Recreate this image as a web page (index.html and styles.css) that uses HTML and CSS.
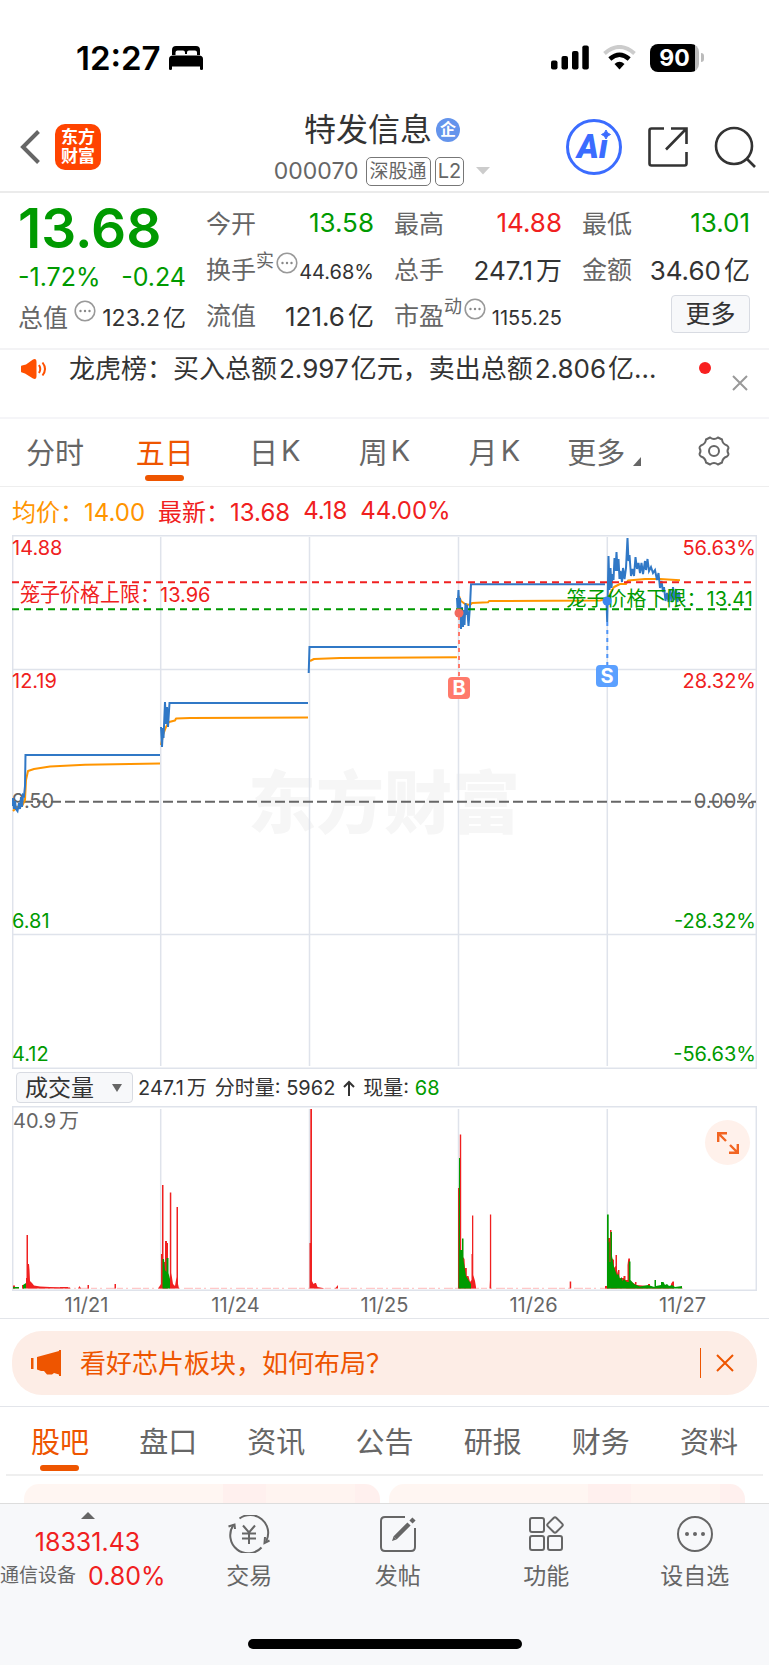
FILE: index.html
```html
<!DOCTYPE html>
<html lang="zh-CN">
<head>
<meta charset="utf-8">
<meta name="viewport" content="width=device-width, initial-scale=1">
<title>特发信息 000070</title>
<link rel="stylesheet" href="styles.css">
</head>
<body>
<div class="app">
  <div class="status">
    <div class="status-left">
      <span class="clock">12:27</span>
      <svg width="34" height="24" viewBox="0 0 34 24" aria-hidden="true">
        <path d="M3 9V4Q3 0 7 0H27Q31 0 31 4V9H28V6.500Q28 4.500 26 4.500H20Q18 4.500 18 6.500V8H16V6.500Q16 4.500 14 4.500H8.500Q6.500 4.500 6.500 6.500V9Z"/>
        <path d="M0 23V13Q0 9.500 4 9.500H30Q34 9.500 34 13V23Q34 24 32.500 24Q31 24 31 23V20.500H3V23Q3 24 1.500 24Q0 24 0 23Z"/>
      </svg>
    </div>
    <div class="status-right">
      <svg width="38" height="25" viewBox="0 0 38 25" aria-hidden="true">
        <rect x="0" y="15.500" width="6.500" height="9" rx="2"/><rect x="10.500" y="11" width="6.500" height="13.500" rx="2"/><rect x="21" y="6" width="6.500" height="18.500" rx="2"/><rect x="31.300" y="0.500" width="6.500" height="24" rx="2"/>
      </svg>
      <svg width="33" height="25" viewBox="0 0 33 25" fill="none" aria-hidden="true">
        <path d="M1.500 8.500Q16.500 -4.500 31.500 8.500" stroke="#ccc" stroke-width="4"/>
        <path d="M6.800 14Q16.500 5.500 26.200 14" stroke="#000" stroke-width="4.500"/>
        <path d="M11.500 19Q16.500 14.500 21.500 19L16.500 24.500Z" fill="#000"/>
      </svg>
      <span class="battery"><span class="battery-body">90</span><span class="battery-tip"></span></span>
    </div>
  </div>

  <header class="header">
    <div class="header-left">
      <button class="plain" aria-label="返回"><svg width="20" height="34" viewBox="0 0 20 34" fill="none" stroke="#666" stroke-width="4"><path d="M18.500 1.500L3 17L18.500 32.500"/></svg></button>
      <span class="logo">东方<br>财富</span>
    </div>
    <div class="header-mid">
      <h1 class="title">特发信息<span class="badge-qi">企</span></h1>
      <div class="subtitle"><span>000070</span><span class="tag">深股通</span><span class="tag tag-l2">L2</span>
        <svg class="subtitle-caret" width="14" height="8" viewBox="0 0 14 8" fill="#ccc"><path d="M0 0H14L7 7.500Z"/></svg></div>
    </div>
    <div class="header-right">
      <button class="plain" aria-label="AI"><svg width="56" height="56" viewBox="0 0 56 56" fill="none">
        <circle cx="28" cy="28" r="26.500" stroke="#3b6cff" stroke-width="3"/>
        <text class="ai-text" x="11" y="39">Aı</text>
        <path d="M40 11Q41 14.500 44.500 15.500Q41 16.500 40 20Q39 16.500 35.500 15.500Q39 14.500 40 11Z" fill="#3b6cff" stroke="#3b6cff" stroke-width="1"/>
      </svg></button>
      <button class="plain" aria-label="分享"><svg width="40" height="40" viewBox="0 0 40 40" fill="none" stroke="#333" stroke-width="2.600">
        <path d="M16 1.500H3.500Q1.500 1.500 1.500 3.500V36.500Q1.500 38.500 3.500 38.500H36.500Q38.500 38.500 38.500 36.500V25"/><path d="M23 1.500H38.500V17M38 2L18 22.500"/></svg></button>
      <button class="plain" aria-label="搜索"><svg width="42" height="42" viewBox="0 0 42 42" fill="none" stroke="#333" stroke-width="2.600">
        <circle cx="20" cy="20" r="18"/><path d="M32.500 32.500L41 41"/></svg></button>
    </div>
  </header>

  <section class="quote">
    <div class="qcol">
      <div class="price green">13.68</div>
      <div class="qrow qrow-change green"><span>-1.72%</span><span>-0.24</span></div>
      <div class="qrow qrow-cap"><span class="lab">总值</span><svg class="more-dot gap-left" viewBox="0 0 22 22"><use href="#dots"/></svg><span class="val val-m">123.2<i class="unit">亿</i></span></div>
    </div>
    <div class="qcol">
      <div class="qrow"><span class="lab">今开</span><span class="val green">13.58</span></div>
      <div class="qrow"><span class="lab">换手</span><span class="sup">实</span><svg class="more-dot" viewBox="0 0 22 22"><use href="#dots"/></svg><span class="val val-s">44.68%</span></div>
      <div class="qrow"><span class="lab">流值</span><span class="val">121.6<i class="unit">亿</i></span></div>
    </div>
    <div class="qcol">
      <div class="qrow"><span class="lab">最高</span><span class="val red">14.88</span></div>
      <div class="qrow"><span class="lab">总手</span><span class="val">247.1<i class="unit">万</i></span></div>
      <div class="qrow"><span class="lab">市盈</span><span class="sup">动</span><svg class="more-dot" viewBox="0 0 22 22"><use href="#dots"/></svg><span class="val val-s">1155.25</span></div>
    </div>
    <div class="qcol">
      <div class="qrow"><span class="lab">最低</span><span class="val green">13.01</span></div>
      <div class="qrow"><span class="lab">金额</span><span class="val">34.60<i class="unit">亿</i></span></div>
      <div class="qrow qrow-end"><button class="more-btn">更多</button></div>
    </div>
    <svg width="0" height="0" class="defs"><defs><g id="dots"><circle cx="11" cy="11" r="9.800" fill="none" stroke="#999" stroke-width="1.600"/><g fill="#888"><circle cx="6.500" cy="11" r="1.200"/><circle cx="11" cy="11" r="1.200"/><circle cx="15.500" cy="11" r="1.200"/></g></g></defs></svg>
  </section>

  <section class="news">
    <svg width="26" height="22" viewBox="0 0 26 22" fill="#ff5000"><path d="M1 7.500Q0 7.500 0 8.500V13.500Q0 14.500 1 14.500L4 15.500L12 20.500Q15.500 22 15.500 18V4Q15.500 0 12 1.500L5 6.500Z"/><path d="M18 7Q20.500 11 18 15M21.500 4.500Q26.500 11 21.500 17.500" fill="none" stroke="#ff5000" stroke-width="2"/></svg>
    <span class="news-text">龙虎榜：买入总额<span class="num">2.997</span>亿元，卖出总额<span class="num">2.806</span>亿…</span>
    <span class="news-dot"></span>
    <button class="plain news-close" aria-label="关闭"><svg width="16" height="16" viewBox="0 0 16 16" stroke="#999" stroke-width="2"><path d="M1 1L15 15M15 1L1 15"/></svg></button>
  </section>

  <nav class="periods">
    <button class="tab">分时</button><button class="tab active">五日</button><button class="tab">日<span class="k">K</span></button><button class="tab">周<span class="k">K</span></button><button class="tab">月<span class="k">K</span></button>
    <button class="tab">更多<svg class="corner" width="8" height="9" viewBox="0 0 8 9" fill="#666"><path d="M8 0V9H0Z"/></svg></button>
    <button class="tab" aria-label="设置"><svg width="32" height="30" viewBox="0 0 32 30" fill="none" stroke="#666" stroke-width="2"><path d="M12 1.500Q16 4.500 20 1.500L24 3.500Q24.500 8 29 9.500Q30.500 10.500 30.500 12Q28.500 15 30.500 18Q30.500 19.500 29 20.500Q24.500 22 24 26.500L20 28.500Q16 25.500 12 28.500L8 26.500Q7.500 22 3 20.500Q1.500 19.500 1.500 18Q3.500 15 1.500 12Q1.500 10.500 3 9.500Q7.500 8 8 3.500Z"/><circle cx="16" cy="15" r="5"/></svg></button>
  </nav>

  <div class="legend"><span class="orange">均价：14.00</span><span class="red">最新：13.68</span><span class="red">4.18</span><span class="red">44.00%</span></div>

  <div class="chart-wrap">
    <svg class="chart" viewBox="12 535 745 534" role="img" aria-label="五日走势">
      <text class="watermark" x="384" y="828">东方财富</text>
      <g stroke="#dfe3eb" stroke-width="1.500" fill="none">
        <path d="M12 535.700H756.300V1068.200H12.700V535.700M12 669.500H756M12 934.500H756"/>
        <path d="M160.700 537V1066M309.500 537V1066M458.500 537V1066M607.300 537V1066"/>
      </g>
      <path d="M23 801.700H756" stroke="#666" stroke-width="2" stroke-dasharray="10 4"/>
      <g class="axis">
        <text x="12" y="555" class="f-red">14.88</text><text x="12" y="688" class="f-red">12.19</text><text x="12" y="808" class="f-gray">9.50</text><text x="12" y="928" class="f-green">6.81</text><text x="12" y="1061" class="f-green">4.12</text>
        <text x="756" y="555" class="f-red end">56.63%</text><text x="756" y="688" class="f-red end">28.32%</text><text x="756" y="808" class="f-gray end">0.00%</text><text x="756" y="928" class="f-green end">-28.32%</text><text x="756" y="1061" class="f-green end">-56.63%</text>
      </g>
      <g fill="none" stroke="#ff9500" stroke-width="2" stroke-linejoin="round">
        <path d="M13 811L17 807L22 806L25 800L26 780L28 771L34 769L50 766.500L85 764.800L160 763.500"/>
        <path d="M161 745L163 735L166 727L169 722L175 720.500L176 718.500L190 718L308 717.600"/>
        <path d="M310 661L314 659L340 658L457 657.300"/>
        <path d="M459 596L461 601L465 604L470 605L472 603L488 602.300L489 601L600 600.500L606 599"/>
        <path d="M608 600L611 592L614 587L620 584L626 584L628 580.500L645 579L660 579L680 580.300"/>
      </g>
      <g fill="none" stroke="#3078c6" stroke-width="2" stroke-linejoin="miter">
        <path d="M12.500 806L13 798L14 809L15 801L16 809L17.500 811L19 803L20 809L21 797L22 807L23 795L24 796L25 786L25.500 755H160"/>
        <path d="M161 727L162 747L163 728L163.500 738L165 702L166 724L167 707L168 727L169.500 703H308"/>
        <path d="M308.700 673L309.500 647H457"/>
        <path d="M457 598L457.500 608L458.500 590L459.500 615L460 598L461 629L462 607L463 627L464 610L464.500 625L465.500 603L466.500 615L467 605L468.500 626L470 606L471 584.300H605"/>
        <path d="M606.500 600L607.200 622L608.500 556L609.500 590L610.500 568L611.500 588L612.500 574L613.500 580L614.500 558L615.500 571L616.500 552L617.500 571L618.500 559L619.500 579L620.500 571L622 582L623 568L624.500 579L626 568L627.500 538L628.500 561L629.500 555L631 576L632.500 569L634 576L635.500 557L637 569L638.500 563L640 573L641.500 563L643 574L645 561L646 570L647.500 559L649 571L651 567L653 573L655 570L657 580L658.500 573L660 588L661.500 581L663 592L664 587L665.500 601L667 593L668.500 602L670 590L671.500 602L673 587L674.500 600L676 589L677.500 602L679 592L680 601"/>
      </g>
      <path d="M12 582.300H756" stroke="#f02020" stroke-width="2" stroke-dasharray="7 5"/>
      <path d="M12 609.300H756" stroke="#009900" stroke-width="2" stroke-dasharray="7 5"/>
      <g class="cage"><text x="20" y="602" class="f-red">笼子价格上限：13.96</text><text x="753" y="606" class="f-green end">笼子价格下限：13.41</text></g>
      <path d="M459 616V677" stroke="#ff7a6b" stroke-width="2" stroke-dasharray="4 4"/>
      <path d="M607.300 622V665" stroke="#4f94f5" stroke-width="2" stroke-dasharray="4 4"/>
      <circle cx="459" cy="613" r="4.500" fill="#f26a5e"/><circle cx="607" cy="601" r="4.500" fill="#3c86ee"/>
      <rect x="448" y="677" width="22" height="22" rx="4" fill="#ff7a6b"/><text class="mark" x="459" y="695">B</text>
      <rect x="596" y="665" width="22" height="22" rx="4" fill="#5ba0ff"/><text class="mark" x="607" y="683">S</text>
    </svg>
  </div>

  <div class="volbar">
    <label class="vol-select"><select aria-label="指标"><option>成交量</option></select><svg width="10" height="8" viewBox="0 0 10 8" fill="#666"><path d="M0 0H10L5 8Z"/></svg></label>
    <span class="vol-info"><span>247.1<i class="unit">万</i></span><span>分时量: 5962</span><svg width="12" height="16" viewBox="0 0 12 16" fill="none" stroke="#333" stroke-width="2" role="img" aria-label="上升"><path d="M6 16V2M1 7L6 2L11 7"/></svg><span>现量: <span class="green">68</span></span></span>
  </div>

  <div class="chart-wrap vol-wrap">
    <svg class="chart" viewBox="12 1106 745 185" role="img" aria-label="成交量">
      <g stroke="#dfe3eb" stroke-width="1.500" fill="none">
        <path d="M12 1106.700H756.300V1290.200H12.700V1106.700"/>
        <path d="M160.700 1109V1289M309.500 1109V1289M458.500 1109V1289M607.300 1109V1289"/>
      </g>
      <path d="M13 1288.300H683" stroke="#fbb" stroke-width="1" stroke-dasharray="6 3 2 4 9 2"/>
      <g fill="#f02020">
        <path d="M26 1288.500V1278H26.500V1235H28V1264H29L29.500 1270L30 1281L32 1283L34 1285.500L40 1286.500L50 1287L70 1287.500V1288.500ZM13 1288.500V1285.500H15V1288.500ZM22 1288.500V1285H24V1288.500ZM60 1288.500V1287H68V1288.500ZM78 1288.500L79.500 1286L81 1288.500ZM87.500 1288.500V1285H89V1288.500ZM114.500 1288.500V1284H116V1288.500ZM158 1288.500L161 1284V1254H162V1185H163.500V1262H165V1241H167V1243H168V1288.500Z"/>
        <path d="M169.800 1288.500V1192.500H171.300V1273L173 1284L175 1286L176.500 1277V1207H178V1284L179 1288.500ZM309.500 1288.500V1243H310.300V1109H312V1281L313.500 1284L315 1283H316L317.500 1287L325 1288.500ZM335 1288.500L338 1285V1288.500Z"/>
        <path d="M458 1288.500V1188H459.800V1134.500H461.200V1257H463L464.500 1259L465 1268H466.800V1276H468.500L470 1282L471.500 1280V1254H472V1215.500H473.300V1275L475 1281L476 1287V1288.500ZM489.500 1288.500L489.900 1280V1214.500H491.200V1288.500ZM569.700 1288.500V1281.500H571.200V1288.500Z"/>
        <path d="M605 1288.500V1286H608V1238H610V1230H611.500V1258L614 1260V1268L615.500 1266V1255H617V1274L618 1270H619.500V1278H623.500V1276H625.500V1280H627.500V1265L628.300 1258.500H630V1281L635 1284V1282H636.500V1285L648 1286V1284H650V1287H671V1284L672.500 1281.500H674V1288.500Z"/>
      </g>
      <g fill="#009a00">
        <path d="M13 1288.500V1287H19V1288.500ZM23 1288.500V1285L26 1283V1288.500ZM162.500 1288.500V1259H164L165 1270L166.500 1272V1258H168.500V1273L170 1279V1288.500Z"/>
        <path d="M458.600 1288.500L459 1158H460V1250H462V1238.500H463.500V1260L465 1270L466 1276L469 1281L471 1284V1288.500Z"/>
        <path d="M607 1288.500V1214.500H608.700V1243L609.500 1241V1262H610.500V1232H612V1256L613.500 1265L615 1270L617 1275L618.500 1274L620 1279L622 1277V1281L624 1279L627 1282H628.800V1261.500H630.500V1280L634 1284L640 1286.500L648 1285L654.500 1287V1280H656V1286L661 1285V1282H663.500L665 1285L667 1284L669 1286L672 1285L675 1287L682 1286V1288.500Z"/>
      </g>
      <text class="voltop" x="13" y="1128">40.9<tspan dx="3">万</tspan></text>
    </svg>
    <button class="expand" aria-label="全屏"><svg width="22" height="22" viewBox="0 0 22 22" fill="none" stroke="#f26522" stroke-width="2.400"><path d="M1.200 10V1.200H10M1.500 1.500L9 9M20.800 12V20.800H12M20.500 20.500L13 13"/></svg></button>
    <div class="dates"><span>11/21</span><span>11/24</span><span>11/25</span><span>11/26</span><span>11/27</span></div>
  </div>

  <section class="promo-wrap">
    <div class="promo">
      <svg width="31" height="26" viewBox="0 0 31 26" fill="#ee5500"><path d="M0 8H2.500V19H0ZM6 7L28 1V0H30V26H28V24.500L23 23L21 24.500H16L13 21H10L6 19.500Z"/></svg>
      <a class="promo-text" href="#">看好芯片板块，如何布局？</a>
      <span class="promo-sep"></span>
      <button class="plain" aria-label="关闭"><svg width="18" height="18" viewBox="0 0 18 18" stroke="#ee5500" stroke-width="2"><path d="M1 1L17 17M17 1L1 17"/></svg></button>
    </div>
  </section>

  <nav class="sections">
    <button class="tab active">股吧</button><button class="tab">盘口</button><button class="tab">资讯</button><button class="tab">公告</button><button class="tab">研报</button><button class="tab">财务</button><button class="tab">资料</button>
  </nav>
  <div class="cards"><div class="card"></div><div class="card"></div></div>

  <footer class="bottom">
    <div class="bottom-row">
      <a class="index" href="#">
        <svg width="14" height="7" viewBox="0 0 14 7" fill="#666"><path d="M7 0L14 7H0Z"/></svg>
        <span class="index-num red">18331.43</span>
        <span class="index-line"><span class="index-name">通信设备</span><span class="red">0.80%</span></span>
      </a>
      <a class="nav" href="#"><svg width="44" height="38" viewBox="0 0 44 38" fill="none" stroke="#666" stroke-width="2"><path d="M12.500 3.500A18 18 0 0 1 39.300 26M34.500 32.500A18 18 0 0 1 6.500 10"/><path d="M1.500 11.500L7.500 9.500L8 14M42.500 25.500L37.500 28L38 22"/><path d="M16 10.500L22 17.500L28 10.500M15 18.500H29M15 23.500H29M22 17.500V29"/></svg>交易</a>
      <a class="nav" href="#"><svg width="38" height="38" viewBox="0 0 38 38" fill="none" stroke="#666" stroke-width="2"><path d="M26 2H6Q2 2 2 6V32Q2 36 6 36H32Q36 36 36 32V13"/><path d="M16 23L30 9M32 7L35 4" stroke-width="4.500"/><path d="M13 26L14.500 21.500L17.500 24.500Z" fill="#666" stroke="none"/></svg>发帖</a>
      <a class="nav" href="#"><svg width="36" height="38" viewBox="0 0 36 38" fill="none" stroke="#666" stroke-width="2"><rect x="2" y="3" width="14" height="14" rx="2"/><rect x="2" y="21" width="14" height="14" rx="2"/><rect x="20" y="21" width="14" height="14" rx="2"/><rect x="21" y="4" width="12" height="12" rx="2" transform="rotate(45 27 10)"/></svg>功能</a>
      <a class="nav" href="#"><svg width="38" height="38" viewBox="0 0 38 38" fill="none" stroke="#666" stroke-width="2"><circle cx="19" cy="19" r="17"/><g fill="#666" stroke="none"><circle cx="11" cy="19" r="2"/><circle cx="19" cy="19" r="2"/><circle cx="27" cy="19" r="2"/></g></svg>设自选</a>
    </div>
    <div class="home"></div>
  </footer>
</div>
</body>
</html>
```
FILE: styles.css
```css
* { box-sizing: border-box; }
body {
  margin: 0;
  background: #fff;
  color: #333;
  font-family: Inter, "Noto Sans CJK SC", sans-serif;
  font-size: 25px;
}
svg { display: block; flex: none; }
button, select { font: inherit; color: inherit; }
a { color: inherit; text-decoration: none; }
.plain { background: none; border: 0; padding: 0; display: block; }
.green { color: #009a00; }
.red { color: #f02020; }
.orange { color: #ff9500; }
.unit { font-style: normal; margin-left: 3px; }
.defs { position: absolute; }

/* status bar */
.status {
  height: 103px;
  padding: 12px 65px 0 76px;
  display: flex;
  align-items: center;
  justify-content: space-between;
}
.status-left { display: flex; align-items: center; gap: 8px; color: #000; }
.clock { font-size: 33px; font-weight: 600; line-height: 40px; }
.status-right { display: flex; align-items: center; gap: 14px; }
.battery { display: flex; align-items: center; gap: 2px; }
.battery-body {
  width: 49px;
  height: 28px;
  border-radius: 8px;
  background: linear-gradient(90deg, #000 0 45px, #bbb 45px);
  color: #fff;
  font-size: 23px;
  font-weight: 700;
  line-height: 28px;
  text-align: center;
}
.battery-tip { width: 3px; height: 9px; border-radius: 0 3px 3px 0; background: #bbb; }

/* header */
.header {
  height: 90px;
  padding: 0 13px 0 8px;
  display: grid;
  grid-template-columns: 1fr auto 1fr;
  align-items: center;
  border-bottom: 2px solid #ebebeb;
}
.header-left { display: flex; align-items: center; gap: 15px; padding-left: 12px; }
.header-mid { padding-top: 6px; }
.logo {
  width: 46px;
  height: 46px;
  padding-top: 4px;
  border-radius: 10px;
  background: #ff4400;
  color: #fff;
  font-size: 17px;
  font-weight: 700;
  line-height: 19px;
  text-align: center;
}
.title {
  margin: 0;
  display: flex;
  align-items: center;
  gap: 4px;
  font-size: 32px;
  font-weight: 400;
  line-height: 42px;
  justify-content: center;
}
.badge-qi {
  width: 24px;
  height: 24px;
  border-radius: 50%;
  background: #6494ec;
  color: #fff;
  font-size: 16px;
  font-weight: 700;
  line-height: 23px;
  text-align: center;
}
.subtitle {
  display: flex;
  align-items: center;
  gap: 4px;
  color: #666;
  font-size: 23px;
  line-height: 40px;
}
.tag {
  height: 29px;
  margin-left: 3px;
  padding: 0 3px;
  border: 1px solid #777;
  border-radius: 5px;
  font-size: 19px;
  line-height: 27px;
}
.tag-l2 { margin-left: 0; font-size: 20px; padding: 0 2px; }
.subtitle-caret { margin-left: 8px; }
.header-right { display: flex; align-items: center; justify-content: flex-end; gap: 26px; }
.ai-text { font-family: Roboto, Inter, sans-serif; font-size: 33px; font-weight: 900; font-style: italic; fill: #3b6cff; }

/* quote panel */
.quote {
  height: 157px;
  padding: 6px 19px 0 18px;
  display: grid;
  grid-template-columns: repeat(4, minmax(0, 1fr));
  gap: 20px;
  border-bottom: 2px solid #f3f3f5;
}
.qrow { height: 46px; display: flex; align-items: center; font-size: 26px; }
.qrow-change { height: 42px; justify-content: space-between; font-size: 25px; }
.qrow-cap { height: 36px; }
.qrow-end { justify-content: flex-end; }
.lab { color: #666; font-size: 25px; }
.val { margin-left: auto; white-space: nowrap; }
.val-m { font-size: 23px; }
.val-s { font-size: 20px; padding-top: 7px; }
.sup { color: #666; font-size: 18px; padding-bottom: 18px; }
.more-dot { width: 22px; height: 22px; margin-bottom: 10px; }
.sup + .more-dot { margin-left: 2px; }
.gap-left { margin-left: 6px; }
.price { height: 57px; font-size: 55px; font-weight: 600; line-height: 58px; }
.more-btn {
  width: 79px;
  height: 38px;
  padding: 0;
  border: 1px solid #d8dbe2;
  border-radius: 4px;
  background: #f7f8fa;
  font-size: 25px;
  line-height: 34px;
}

/* news line */
.news {
  height: 69px;
  padding: 0 21px;
  display: flex;
  align-items: flex-start;
  border-bottom: 2px solid #f5f5f8;
}
.news > svg { margin-top: 8px; }
.news-text { flex: 1; margin-left: 22px; font-size: 26px; line-height: 37px; white-space: nowrap; }
.num { margin: 0 2px; }
.news-dot { width: 12px; height: 12px; margin-top: 12px; border-radius: 50%; background: #f82020; }
.news-close { margin: 25px 0 0 21px; }

/* tab bars */
.periods, .sections { display: flex; }
.periods { height: 68px; border-bottom: 1px solid #eee; }
.tab {
  flex: 1;
  position: relative;
  padding: 0 0 4px;
  border: 0;
  background: none;
  color: #666;
  display: flex;
  align-items: center;
  justify-content: center;
  font-size: 29px;
}
.active { color: #ee5500; }
.active::after {
  content: "";
  position: absolute;
  left: calc(50% - 20px);
  bottom: 5px;
  width: 39px;
  height: 6px;
  border-radius: 3px;
  background: #ee5500;
}
.k { margin-left: 3px; }
.corner { align-self: flex-end; margin: 0 0 16px 8px; }
.legend {
  height: 48px;
  padding: 0 12px 2px;
  display: flex;
  align-items: center;
  gap: 13px;
  font-size: 24px;
}

/* charts */
.chart-wrap { padding: 0 12px; position: relative; }
.chart { width: 100%; height: auto; }
.watermark { font-size: 68px; font-weight: 900; fill: #f6f6f6; text-anchor: middle; }
.axis, .cage, .voltop { font-size: 20px; }
.voltop { fill: #666; }
.f-red { fill: #f02020; }
.f-green { fill: #009a00; }
.f-gray { fill: #666; }
.end { text-anchor: end; }
.mark { font-size: 20px; font-weight: 700; fill: #fff; text-anchor: middle; }
.volbar { height: 37px; padding: 0 16px; display: flex; align-items: center; gap: 5px; }
.vol-select {
  width: 117px;
  height: 31px;
  padding: 0 10px 0 8px;
  display: flex;
  align-items: center;
  justify-content: space-between;
  border: 1px solid #d8dbe2;
  border-radius: 4px;
  background: #f7f8fa;
}
.vol-select select { appearance: none; border: 0; padding: 0; background: none; font-size: 23px; line-height: 28px; }
.vol-info { display: flex; align-items: center; gap: 8px; font-size: 20px; line-height: 28px; white-space: nowrap; }
.expand {
  position: absolute;
  top: 14px;
  right: 19px;
  width: 45px;
  height: 45px;
  padding: 0;
  border: 0;
  border-radius: 50%;
  background: #fff1eb;
  display: flex;
  align-items: center;
  justify-content: center;
}
.dates {
  height: 27px;
  display: grid;
  grid-template-columns: repeat(5, 1fr);
  text-align: center;
  color: #666;
  font-size: 20px;
  line-height: 29px;
}

/* promo */
.promo-wrap { padding: 12px 12px 11px; border-top: 1px solid #e3e5ea; border-bottom: 1px solid #e3e5ea; }
.promo {
  height: 64px;
  padding: 0 23px 0 19px;
  display: flex;
  align-items: center;
  border-radius: 30px;
  background: #fdede6;
  color: #ee5500;
}
.promo-text { flex: 1; margin-left: 18px; padding-bottom: 4px; font-size: 26px; }
.promo-sep { width: 1px; height: 30px; margin-right: 15px; background: #ee5500; }

.sections { height: 69px; margin: 0 6px; border-bottom: 2px solid #efefef; }
.sections .tab { padding-bottom: 2px; }
.sections .active::after { bottom: 3px; }
.cards { height: 27px; padding: 8px 24px 0; display: grid; grid-template-columns: 1fr 1fr; gap: 9px; }
.card { border-radius: 15px 15px 0 0; background: linear-gradient(90deg, #fff6f2 0 56%, #fff0ee 56% 68%, #fff4f0 68% 93%, #fff0ee 93%); }

/* bottom bar */
.bottom { padding-bottom: 16px; border-top: 1px solid #ddd; background: #f7f8fa; }
.bottom-row { height: 100px; display: grid; grid-template-columns: 175px repeat(4, 1fr); }
.index { display: flex; flex-direction: column; align-items: center; padding-top: 8px; line-height: 30px; }
.index-num { margin-top: 8px; }
.index-line { align-self: flex-start; margin-top: 4px; display: flex; align-items: center; gap: 12px; white-space: nowrap; }
.index-name { color: #666; font-size: 19px; }
.nav { display: flex; flex-direction: column; align-items: center; gap: 7px; padding-top: 11px; color: #666; font-size: 23px; line-height: 32px; }
.home { width: 274px; height: 10px; margin: 35px auto 0; border-radius: 5px; background: #000; }
```
